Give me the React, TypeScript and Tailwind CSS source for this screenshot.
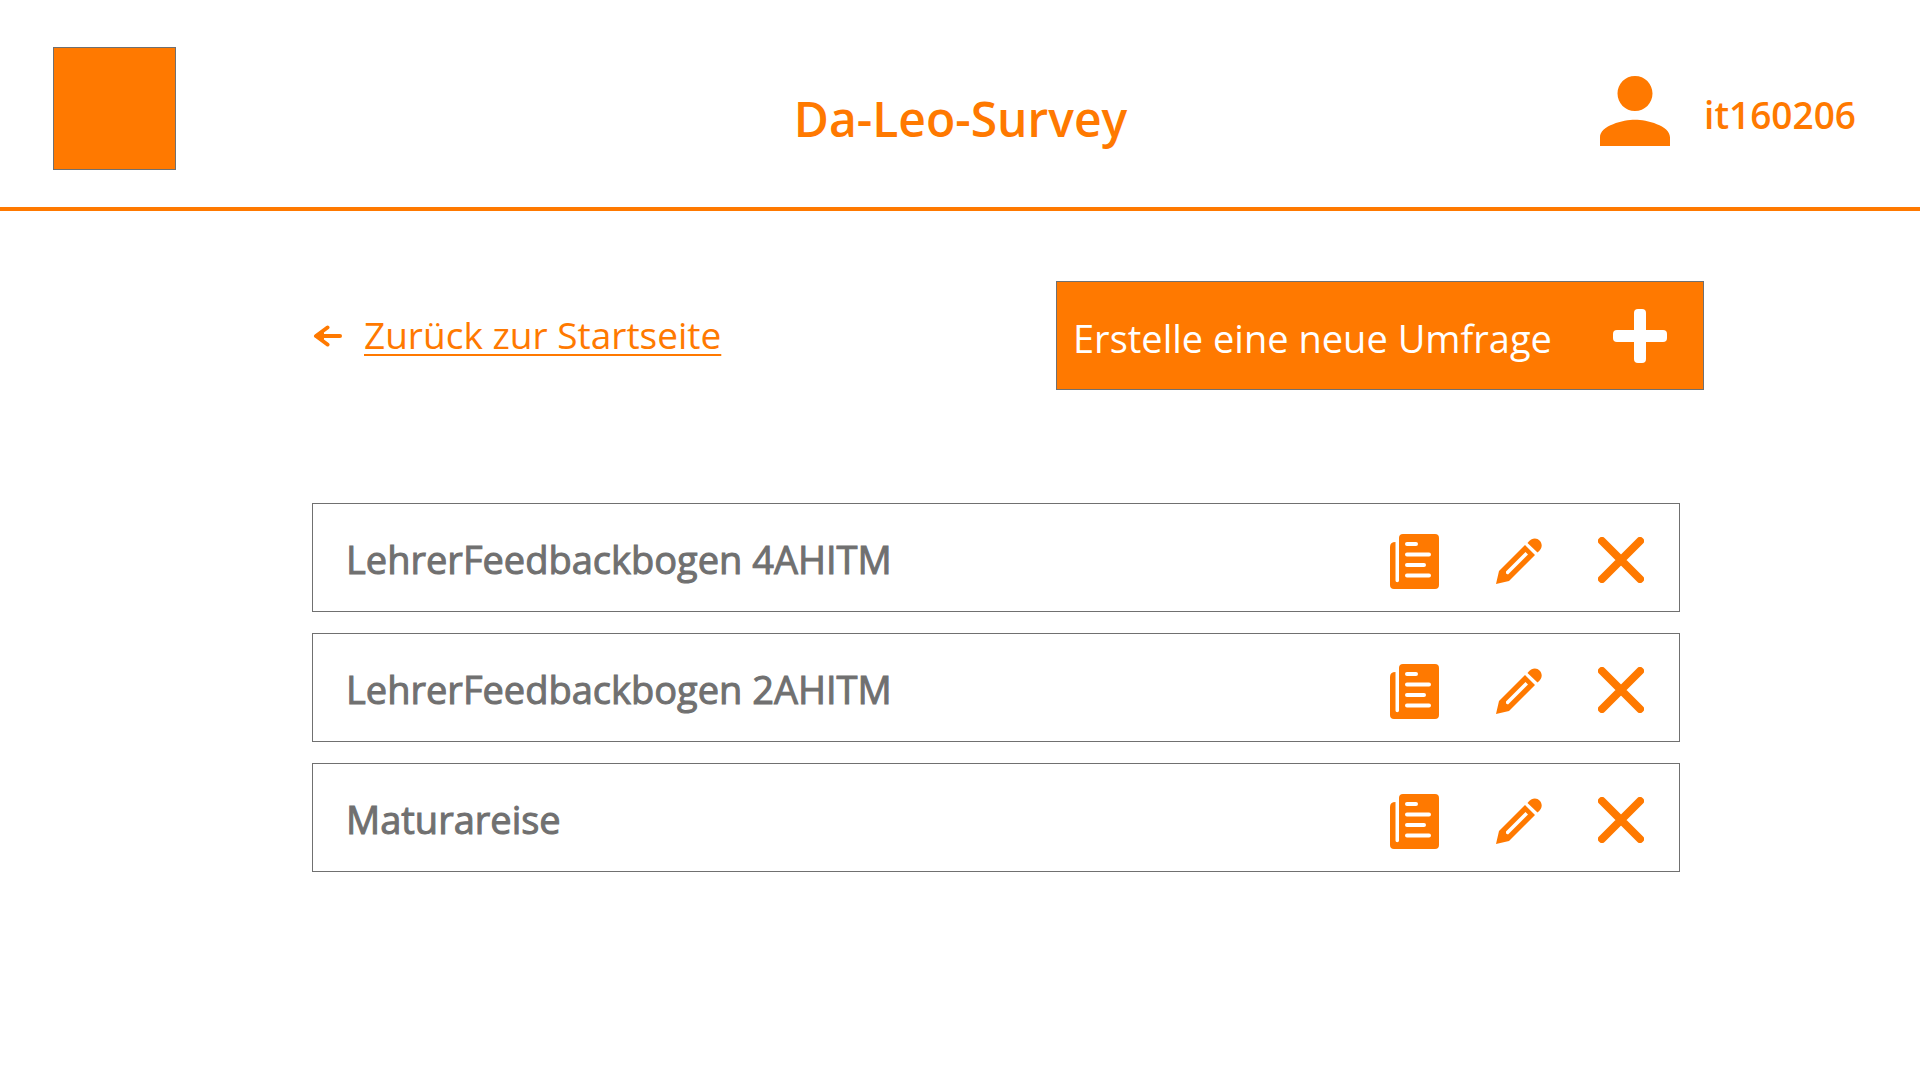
const surveys = ['LehrerFeedbackbogen 4AHITM', 'LehrerFeedbackbogen 2AHITM', 'Maturareise'];

function PersonIcon() {
  return (
    <svg viewBox="4 4 16 16" className="size-[70px] fill-current" aria-hidden="true">
      <path d="M12 12c2.21 0 4-1.79 4-4s-1.79-4-4-4-4 1.79-4 4 1.79 4 4 4zm0 2c-2.67 0-8 1.34-8 4v2h16v-2c0-2.66-5.33-4-8-4z" />
    </svg>
  );
}

function ArrowIcon() {
  return (
    <svg viewBox="0 0 30 22" className="h-[22px] w-[30px]" fill="none" stroke="currentColor" strokeWidth="4" strokeLinecap="round" strokeLinejoin="round" aria-hidden="true">
      <path d="M28 11H5" />
      <path d="M15.500 2.500L4 11l11.500 8.500" />
      <path d="M4 11l8-4v8z" fill="currentColor" stroke="none" />
    </svg>
  );
}

function PlusIcon() {
  return (
    <svg viewBox="0 0 54 54" className="size-[54px] fill-current" aria-hidden="true">
      <rect x="21" y="0" width="12" height="54" rx="4" />
      <rect x="0" y="21" width="54" height="12" rx="4" />
    </svg>
  );
}

function PaperIcon() {
  return (
    <svg viewBox="0 0 49 55" className="h-[55px] w-[49px]" aria-hidden="true">
      <path fill="currentColor" d="M13 0H45a4 4 0 0 1 4 4V51a4 4 0 0 1-4 4H4a4 4 0 0 1-4-4V13Q0 8 5.500 8V46.500a1.750 1.750 0 0 0 3.500 0V4a4 4 0 0 1 4-4z" />
      <g stroke="#fff" strokeWidth="4" strokeLinecap="round">
        <path d="M17 10H26M17 20.500H39M17 31H34M17 41.500H39" />
      </g>
    </svg>
  );
}

function PencilIcon() {
  return (
    <svg viewBox="0 0 46 46" className="size-[46px] fill-current" aria-hidden="true">
      <path fillRule="evenodd" d="M29 7L39 17L13 43L0 46L3 33zM29.500 14L10 33.500L10 35.500L12 36.500L32 16.500z" />
      <path d="M31.500 5C35.500-.8 41-.5 43.500 2.500C46.500 5.500 47 10.500 41.500 14.500z" />
    </svg>
  );
}

function CrossIcon() {
  return (
    <svg viewBox="0 0 46 46" className="size-[46px]" fill="none" stroke="currentColor" strokeWidth="8" strokeLinecap="round" aria-hidden="true">
      <path d="M4 4l38 38M42 4L4 42" />
    </svg>
  );
}

export default function App() {
  return (
    <div className="min-h-screen bg-white font-['Open_Sans','Noto_Sans',sans-serif] text-[#ff7900]">
      <header className="grid grid-cols-[1fr_auto_1fr] items-center border-b-4 border-[#ff7900] pt-[47px] pr-[52px] pb-[37px] pl-[53px]">
        <div className="size-[123px] border border-[#707070] bg-[#ff7900]" />
        <h1 className="mt-5 text-[48px] leading-[64px] font-semibold">Da-Leo-Survey</h1>
        <div className="mt-1 mr-3 flex items-center justify-end gap-[34px]">
          <PersonIcon />
          <span className="mt-2 text-[37px] leading-[48px] font-semibold">it160206</span>
        </div>
      </header>
      <main className="pt-[70px] pr-[216px] pl-[312px]">
        <div className="flex items-center justify-between">
          <a href="#" className="flex items-center gap-[22px]">
            <ArrowIcon />
            <span className="mb-0.5 text-[37px] leading-[54px] underline decoration-2 underline-offset-[5px]">Zurück zur Startseite</span>
          </a>
          <button type="button" className="flex h-[109px] w-[648px] items-center justify-between border border-[#707070] bg-[#ff7900] pr-9 pl-4 text-white">
            <span className="mt-1 text-[38px] leading-[54px]">Erstelle eine neue Umfrage</span>
            <PlusIcon />
          </button>
        </div>
        <ul className="mt-[113px] mr-6 flex flex-col gap-[21px]">
          {surveys.map((name) => (
            <li key={name} className="flex h-[109px] items-center justify-between border border-[#707070] pr-[35px] pl-[33px]">
              <span className="mt-0.5 text-[38px] leading-[54px] text-[#707070] [-webkit-text-stroke:1px_#707070]">{name}</span>
              <div className="flex items-center">
                <button type="button" aria-label={`${name} ansehen`} className="mt-2 mr-[57px]">
                  <PaperIcon />
                </button>
                <button type="button" aria-label={`${name} bearbeiten`} className="mt-1.5 mr-14">
                  <PencilIcon />
                </button>
                <button type="button" aria-label={`${name} löschen`} className="mt-1">
                  <CrossIcon />
                </button>
              </div>
            </li>
          ))}
        </ul>
      </main>
    </div>
  );
}
